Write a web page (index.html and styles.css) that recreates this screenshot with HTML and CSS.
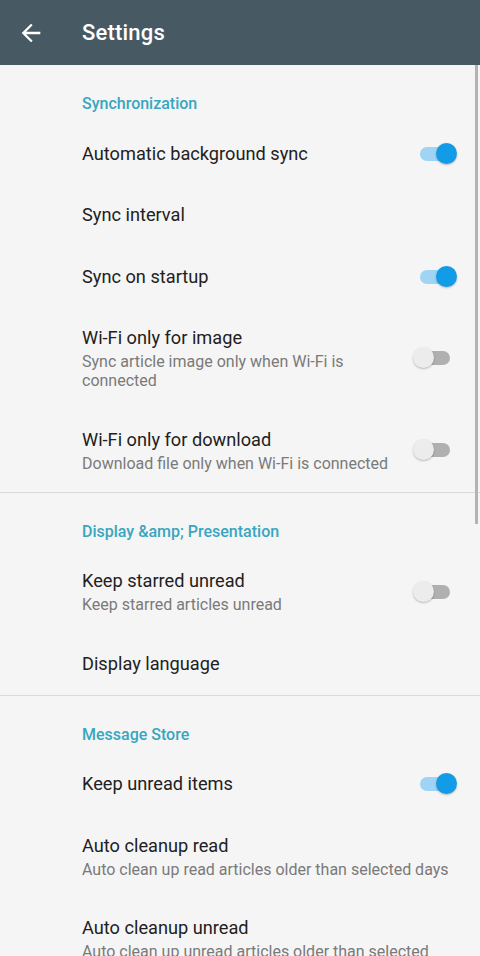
FILE: index.html
```html
<!DOCTYPE html>
<html lang="en">
<head>
    <meta charset="UTF-8">
    <meta name="viewport" content="width=device-width, initial-scale=1.0">
    <title>Settings</title>
    <link rel="stylesheet" href="styles.css">
</head>
<body>
    <header class="app-bar">
        <button class="back-btn" aria-label="Back">
            <svg viewBox="0 0 24 24" width="28" height="28">
                <path fill="#fff" d="M20 11H7.83l5.59-5.59L12 4l-8 8 8 8 1.41-1.41L7.83 13H20v-2z"/>
            </svg>
        </button>
        <h1 class="app-title">Settings</h1>
    </header>

    <main class="settings">
        <section class="category">
            <h2 class="category-title">Synchronization</h2>

            <div class="pref">
                <div class="pref-text">
                    <div class="pref-title">Automatic background sync</div>
                </div>
                <span class="switch on"><span class="track"></span><span class="thumb"></span></span>
            </div>

            <div class="pref">
                <div class="pref-text">
                    <div class="pref-title">Sync interval</div>
                </div>
            </div>

            <div class="pref">
                <div class="pref-text">
                    <div class="pref-title">Sync on startup</div>
                </div>
                <span class="switch on"><span class="track"></span><span class="thumb"></span></span>
            </div>

            <div class="pref">
                <div class="pref-text">
                    <div class="pref-title">Wi-Fi only for image</div>
                    <div class="pref-summary">Sync article image only when Wi-Fi is connected</div>
                </div>
                <span class="switch"><span class="track"></span><span class="thumb"></span></span>
            </div>

            <div class="pref">
                <div class="pref-text">
                    <div class="pref-title">Wi-Fi only for download</div>
                    <div class="pref-summary">Download file only when Wi-Fi is connected</div>
                </div>
                <span class="switch"><span class="track"></span><span class="thumb"></span></span>
            </div>
        </section>

        <section class="category">
            <h2 class="category-title">Display &amp;amp; Presentation</h2>

            <div class="pref">
                <div class="pref-text">
                    <div class="pref-title">Keep starred unread</div>
                    <div class="pref-summary">Keep starred articles unread</div>
                </div>
                <span class="switch"><span class="track"></span><span class="thumb"></span></span>
            </div>

            <div class="pref">
                <div class="pref-text">
                    <div class="pref-title">Display language</div>
                </div>
            </div>
        </section>

        <section class="category">
            <h2 class="category-title">Message Store</h2>

            <div class="pref">
                <div class="pref-text">
                    <div class="pref-title">Keep unread items</div>
                </div>
                <span class="switch on"><span class="track"></span><span class="thumb"></span></span>
            </div>

            <div class="pref">
                <div class="pref-text">
                    <div class="pref-title">Auto cleanup read</div>
                    <div class="pref-summary">Auto clean up read articles older than selected days</div>
                </div>
            </div>

            <div class="pref">
                <div class="pref-text">
                    <div class="pref-title">Auto cleanup unread</div>
                    <div class="pref-summary">Auto clean up unread articles older than selected days</div>
                </div>
            </div>
        </section>

        <div class="scroll-thumb"></div>
    </main>
</body>
</html>
```

FILE: styles.css
```css
body {
    margin: 0;
    height: 956px;
    overflow: hidden;
    font-family: Roboto, "Noto Sans", Arial, sans-serif;
    background-color: #f5f5f5;
    color: #212121;
}

.app-bar {
    display: flex;
    align-items: center;
    height: 65px;
    background-color: #475a64;
    color: #fff;
}

.back-btn {
    display: flex;
    align-items: center;
    justify-content: center;
    width: 28px;
    height: 28px;
    margin-left: 17px;
    padding: 0;
    border: none;
    background: none;
}

.app-title {
    margin: 0 0 0 37px;
    font-size: 22px;
    font-weight: 500;
    letter-spacing: 0.2px;
}

.settings {
    position: relative;
}

.category {
    border-bottom: 1px solid #dadada;
}

.category:last-of-type {
    border-bottom: none;
}

.category-title {
    margin: 0;
    padding: 29px 0 10px 82px;
    font-size: 16px;
    line-height: 19px;
    font-weight: 500;
    color: #38a6bf;
}

.pref {
    display: flex;
    align-items: center;
    padding: 18.75px 23px 18.75px 82px;
}

.pref-text {
    flex: 1;
    min-width: 0;
}

.pref-title {
    font-size: 18.2px;
    line-height: 24px;
    color: #212121;
}

.pref-summary {
    margin-top: 2px;
    font-size: 16px;
    line-height: 19px;
    color: #7a7a7a;
}

.switch {
    position: relative;
    flex: none;
    width: 44px;
    height: 24px;
    margin-left: 18px;
}

.switch .track {
    position: absolute;
    left: 7px;
    top: 5px;
    width: 30px;
    height: 14px;
    border-radius: 7px;
    background-color: #b0b0b0;
}

.switch .thumb {
    position: absolute;
    left: 0;
    top: 1px;
    width: 21px;
    height: 21px;
    border-radius: 50%;
    background-color: #ececec;
    box-shadow: 0 1px 2px rgba(0, 0, 0, 0.25);
}

.switch.on .track {
    background-color: #9fd4f4;
}

.switch.on .thumb {
    left: 23px;
    background-color: #129ce8;
}

.scroll-thumb {
    position: absolute;
    top: 0;
    right: 2px;
    width: 3px;
    height: 459px;
    background-color: #b3b3b3;
}
```
